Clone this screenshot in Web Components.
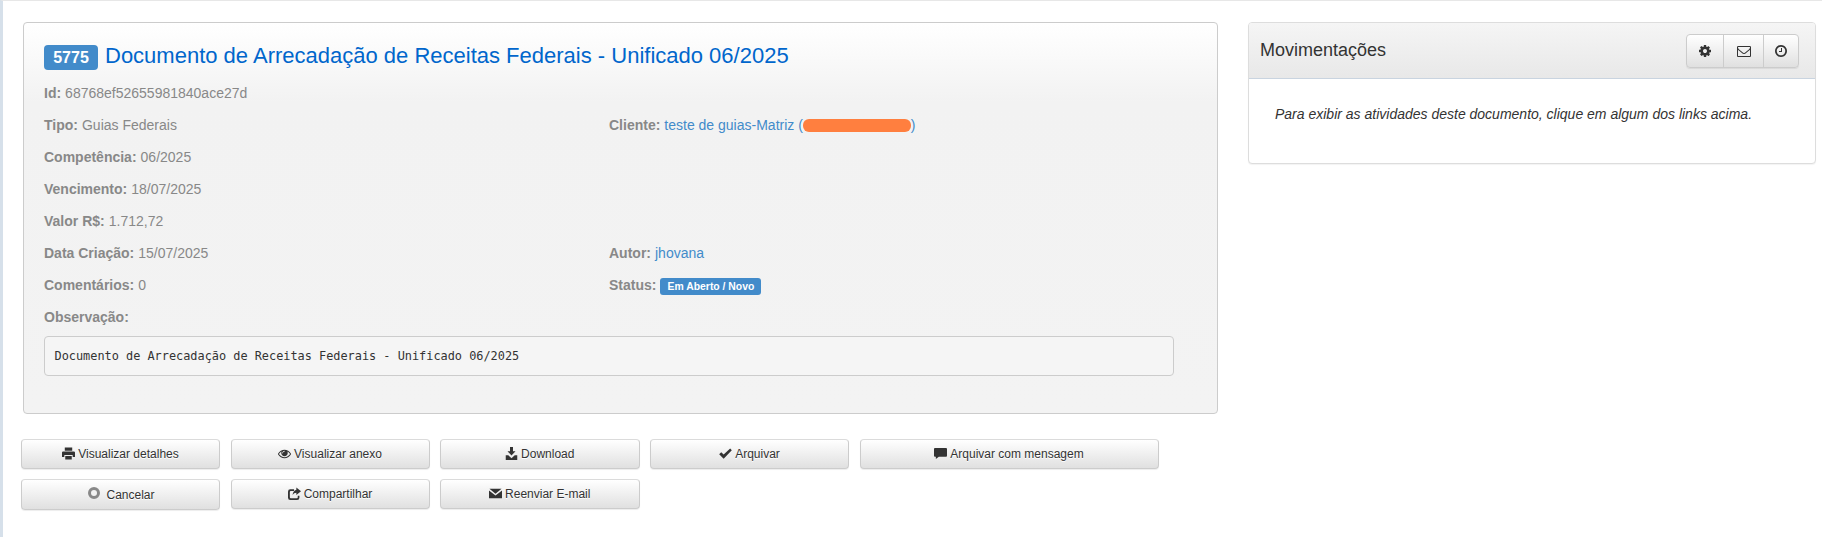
<!DOCTYPE html>
<html lang="pt-BR"><head><meta charset="utf-8"><title>Documento</title>
<style>html,body{margin:0;padding:0;background:#fff;font-family:"Liberation Sans",Arial,sans-serif}</style>
</head><body>
<doc-page>
  <div slot="left">
    <doc-card>
      <span slot="num">5775</span>
      <span slot="title">Documento de Arrecadação de Receitas Federais - Unificado 06/2025</span>
      <info-row wide label="Id:">68768ef52655981840ace27d</info-row>
      <info-row label="Tipo:">Guias Federais</info-row>
      <info-row label="Cliente:" link>teste de guias-Matriz (<red-mark></red-mark>)</info-row>
      <info-row wide label="Competência:">06/2025</info-row>
      <info-row wide label="Vencimento:">18/07/2025</info-row>
      <info-row wide label="Valor R$:">1.712,72</info-row>
      <info-row label="Data Criação:">15/07/2025</info-row>
      <info-row label="Autor:" link>jhovana</info-row>
      <info-row label="Comentários:">0</info-row>
      <info-row label="Status:"><status-tag>Em Aberto / Novo</status-tag></info-row>
      <info-row wide label="Observação:"></info-row>
      <span slot="note">Documento de Arrecadação de Receitas Federais - Unificado 06/2025</span>
    </doc-card>
    <action-bar>
      <act-btn w="199" icon="print">Visualizar detalhes</act-btn>
      <act-btn w="199" icon="eye">Visualizar anexo</act-btn>
      <act-btn w="199.5" icon="save">Download</act-btn>
      <act-btn w="199" icon="ok">Arquivar</act-btn>
      <act-btn w="299" icon="bubble">Arquivar com mensagem</act-btn>
      <act-btn w="199" icon="ring" tall>Cancelar</act-btn>
      <act-btn w="199" icon="share">Compartilhar</act-btn>
      <act-btn w="199.5" icon="mail">Reenviar E-mail</act-btn>
    </action-bar>
  </div>
  <move-panel slot="right">
    <span slot="title">Movimentações</span>
    Para exibir as atividades deste documento, clique em algum dos links acima.
  </move-panel>
</doc-page>
<script>
const FA="0 0 1792 1792",G="0 0 14 14";
const ICONS={
ok:[G,"M.2 7.8 2.4 5.6 5 8.2 12 1.7 13.8 3.5 5 12.6z"],
mail:[G,"M.5 2h13L7 7.2zM0 3.8l7 5.4 7-5.4V12H0z"],
print:[G,"M3 .5h8V4H3zM1.2 4.8h11.6A1.2 1.2 0 0 1 14 6v4.8h-2.5V8.6h-9v2.2H0V6a1.2 1.2 0 0 1 1.2-1.2zM3.5 9.6h7v3.9h-7z"],
save:[G,"M5.4 0h3.2v4.6h2.7L7 9.2 2.7 4.6h2.7zM.8 9h2.7L7 12l3.5-3h2.7v5H.8z"],
bubble:[G,"M1 1.2h12a1 1 0 0 1 1 1v7.2a1 1 0 0 1-1 1H5.2L2 13v-2.6H1a1 1 0 0 1-1-1V2.200a1 1 0 0 1 1-1z"],
share:[G,"M2.500 2.500H6.500V4.300H3a1 1 0 0 0-1 1v5.700a1 1 0 0 0 1 1h6.500a1 1 0 0 0 1-1V9.500h1.800V11.500A2.500 2.500 0 0 1 9.800 14H2.500A2.500 2.500 0 0 1 0 11.500V5A2.500 2.500 0 0 1 2.500 2.500zM9 .5l5 4-5 4V6.300C7.300 6.300 6 7 5 9 5 6 6.500 3.500 9 3z"],
envelopeo:[FA,"M1664 1504v-768q-32 36-69 66-268 206-426 338-51 43-83 67t-86.500 48.500-102.500 24.500h-2q-48 0-102.500-24.500t-86.500-48.500-83-67q-158-132-426-338-37-30-69-66v768q0 13 9.500 22.500t22.500 9.500h1472q13 0 22.500-9.500t9.500-22.500zm0-1051v-24.500l-.5-13-3-12.500-5.500-9-9-7.500-14-2.500h-1472q-13 0-22.500 9.500t-9.500 22.500q0 168 147 284 193 152 401 317 6 5 35 29.500t46 37.500 44.500 31.500 50.500 27.500 43 9h2q20 0 43-9t50.500-27.500 44.500-31.500 46-37.500 35-29.500q208-165 401-317 54-43 100.500-115.500t46.500-131.500zm128-37v1088q0 66-47 113t-113 47h-1472q-66 0-113-47t-47-113v-1088q0-66 47-113t113-47h1472q66 0 113 47t47 113z"],
cog:[FA,"M1152 896q0-106-75-181t-181-75-181 75-75 181 75 181 181 75 181-75 75-181zm512-109v222q0 12-8 23t-20 13l-185 28q-19 54-39 91 35 50 107 138 10 12 10 25t-9 23q-27 37-99 108t-94 71q-12 0-26-9l-138-108q-44 23-91 38-16 136-29 186-7 28-36 28h-222q-14 0-24.500-8.500t-11.500-21.500l-28-184q-49-16-90-37l-141 107q-10 9-25 9-14 0-25-11-126-114-165-168-7-10-7-23 0-12 8-23 15-21 51-66.500t54-70.500q-27-50-41-99l-183-27q-13-2-21-12.500t-8-23.500v-222q0-12 8-23t19-13l186-28q14-46 39-92-40-57-107-138-10-12-10-24 0-10 9-23 26-36 98.500-107.500t94.500-71.500q13 0 26 10l138 107q44-23 91-38 16-136 29-186 7-28 36-28h222q14 0 24.500 8.500t11.500 21.500l28 184q49 16 90 37l142-107q9-9 24-9 13 0 25 10 129 119 165 170 7 8 7 22 0 12-8 23-15 21-51 66.500t-54 70.500q26 50 41 98l183 28q13 2 21 12.500t8 23.500z"],
clock:[FA,"M1024 544v448q0 14-9 23t-23 9h-320q-14 0-23-9t-9-23v-64q0-14 9-23t23-9h224v-352q0-14 9-23t23-9h64q14 0 23 9t9 23zm416 352q0-148-73-273t-198-198-273-73-273 73-198 198-73 273 73 273 198 198 273 73 273-73 198-198 73-273zm224 0q0 209-103 385.500t-279.500 279.500-385.500 103-385.500-103-279.500-279.500-103-385.500 103-385.500 279.500-279.500 385.500-103 385.500 103 279.500 279.500 103 385.500z"],
eye:[FA,"M1664 960q-152-236-381-353 61 104 61 225 0 185-131.500 316.500t-316.500 131.500-316.500-131.500-131.500-316.500q0-121 61-225-229 117-381 353 133 205 333.500 326.500t434.500 121.500 434.500-121.500 333.500-326.500zm-720-384q0-20-14-34t-34-14q-125 0-214.500 89.500t-89.500 214.500q0 20 14 34t34 14 34-14 14-34q0-86 61-147t147-61q20 0 34-14t14-34zm848 384q0 34-20 69-140 230-376.500 368.500t-499.500 138.500-499.500-139-376.500-368q-20-35-20-69t20-69q140-229 376.500-368t499.500-139 499.500 139 376.500 368q20 35 20 69z"]
};
function def(name,html,extra){
  const t=document.createElement('template');t.innerHTML=html;
  customElements.define(name,class extends HTMLElement{
    constructor(){super();this.attachShadow({mode:'open'}).appendChild(t.content.cloneNode(true));}
    connectedCallback(){extra&&extra(this,this.shadowRoot);}
  });
}
def('fa-icon',`<style>:host{display:inline-block;line-height:0}svg{display:block;fill:currentColor}</style><svg><path></path></svg>`,(h,s)=>{
  const z=h.getAttribute('size')||'14',svg=s.querySelector('svg'),ic=ICONS[h.getAttribute('name')];
  svg.setAttribute('width',z);svg.setAttribute('height',z);svg.setAttribute('viewBox',ic[0]);
  s.querySelector('path').setAttribute('d',ic[1]);
});
def('doc-page',`<style>:host{display:flex;box-sizing:border-box;width:1822px;height:537px;border-top:1px solid #e7e7e7;border-left:3px solid #d6e0ea;padding:21px 0 0 18px;overflow:hidden;background:#fff}
.l{width:1199px;flex:none}.r{margin-left:28px;width:568px;flex:none}</style><div class="l"><slot name="left"></slot></div><div class="r"><slot name="right"></slot></div>`);
def('doc-card',`<style>:host{display:block;box-sizing:border-box;margin-left:2px;width:1195px;height:392px;border:1px solid #ccc;border-radius:4px;padding:22px 20px 0;background:linear-gradient(#fff 0,#f2f2f2 80px,#f3f3f3 100%);color:#888;font-size:14px}
h3{margin:0;height:32px;display:flex;align-items:flex-start;font-weight:400;font-size:22px;line-height:21px;color:#0066cc}
.n{box-sizing:border-box;height:25px;width:54px;flex:none;margin-right:7px;background:#428bca;color:#fff;border-radius:4px;font-size:16px;font-weight:700;text-align:center;line-height:25px}
.g{display:grid;grid-template-columns:565px 1fr;grid-auto-rows:32px}
.note{box-sizing:border-box;width:1130px;height:40px;margin-top:3px;border:1px solid #ccc;border-radius:4px;background:#f5f5f5;padding:0 9.5px;line-height:38px;font-family:"DejaVu Sans Mono",monospace;font-size:11.88px;color:#333;white-space:pre}</style>
<h3><span class="n"><slot name="num"></slot></span><span><slot name="title"></slot></span></h3>
<div class="g"><slot></slot></div><div class="note"><slot name="note"></slot></div>`);
def('info-row',`<style>:host{display:flex;align-items:center;font-size:14px;color:#888;white-space:pre}:host([wide]){grid-column:1/3}b{font-weight:700;margin-right:4px}:host([link]) span{color:#428bca}</style><b></b><span><slot></slot></span>`,(h,s)=>{s.querySelector('b').textContent=h.getAttribute('label');});
def('red-mark',`<style>:host{display:inline-block;width:108px;height:13px;background:#ff7f3f;border-radius:6px;vertical-align:-2px}</style>`);
def('status-tag',`<style>:host{display:inline-block;box-sizing:border-box;width:101px;height:17px;margin-top:3px;background:#428bca;color:#fff;border-radius:3px;font-size:10.4px;font-weight:700;line-height:17px;text-align:center}</style><slot></slot>`);
def('action-bar',`<style>:host{display:flex;flex-wrap:wrap;gap:10px 10.5px;margin-top:25px;width:1199px}</style><slot></slot>`);
def('act-btn',`<style>:host{display:flex;align-items:center;justify-content:center;box-sizing:border-box;height:30px;border:1px solid #ccc;border-color:#dbdbdb #ccc #ccc;border-radius:4px;background:linear-gradient(#fff,#e0e0e0);box-shadow:0 1px 1px rgba(0,0,0,.075);font-size:12px;color:#333;text-shadow:0 1px 0 #fff}
:host([tall]){height:31px}.i{display:inline-flex;margin:-2px 3px 0 0}.ring{width:12px;height:12px;border-radius:50%;border:3px solid #888;box-sizing:border-box;margin:-3px 6px 0 2px;background:#f2f2f2}</style><span class="i"></span><slot></slot>`,(h,s)=>{
  h.style.width=h.getAttribute('w')+'px';
  const n=h.getAttribute('icon'),i=s.querySelector('.i');
  if(n==='ring'){i.className='ring';}else{i.innerHTML=`<fa-icon name="${n}" size="13"></fa-icon>`;}
});
def('move-panel',`<style>:host{display:block;box-sizing:border-box;width:568px;height:142px;border:1px solid #ddd;border-radius:4px;overflow:hidden;background:#fff;box-shadow:0 1px 1px rgba(0,0,0,.05);color:#333}
header{display:flex;align-items:center;justify-content:space-between;box-sizing:border-box;height:56px;padding:0 16px 0 11px;background:linear-gradient(#f5f5f5,#e8e8e8);border-bottom:1px solid #c9d4e0;font-size:18px}
.grp{display:flex;height:34px;border:1px solid #ccc;border-radius:4px;box-sizing:border-box;background:linear-gradient(#fff,#e0e0e0);box-shadow:0 1px 1px rgba(0,0,0,.075)}
.grp span{display:flex;align-items:center;justify-content:center;box-sizing:border-box;height:100%;border-left:1px solid #ccc}.grp span:first-child{border-left:0;width:36px}.grp span:nth-child(2){width:40px}.grp span:nth-child(3){width:35px}
.b{padding:26px 26px 0;font-style:italic;font-size:14px;line-height:18px}</style>
<header><span><slot name="title"></slot></span><div class="grp"><span><fa-icon name="cog" size="14"></fa-icon></span><span><fa-icon name="envelopeo" size="14"></fa-icon></span><span><fa-icon name="clock" size="14"></fa-icon></span></div></header><div class="b"><slot></slot></div>`);
</script>
</body></html>
